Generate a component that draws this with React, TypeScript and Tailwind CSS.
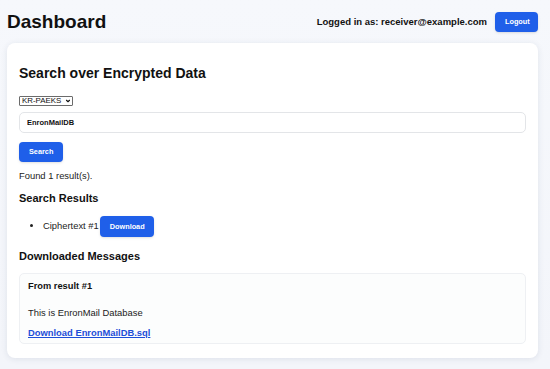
import { ChevronDown } from 'lucide-react';

function BlueButton({ label, className = '' }: { label: string; className?: string }) {
  return (
    <button
      type="button"
      className={`h-[20px] rounded-[4px] bg-[#1f5fe9] px-[10px] text-[7.3px] font-bold leading-none text-white shadow-sm ${className}`}
    >
      {label}
    </button>
  );
}

export default function App() {
  return (
    <div
      className="min-h-screen bg-gradient-to-b from-[#f6f8fc] to-[#f3f5fa] pl-[7px] pr-[12px] pt-[12px] text-[#222]"
      style={{ fontFamily: '"Liberation Sans", Arial, sans-serif' }}
    >
      <header className="flex h-[20px] items-center justify-between">
        <h1 className="text-[19px] font-bold leading-[22px] text-[#111]">Dashboard</h1>
        <div className="flex items-center gap-[8px]">
          <span className="text-[9.5px] font-bold text-[#111]">Logged in as: receiver@example.com</span>
          <BlueButton label="Logout" className="w-[43px] px-0" />
        </div>
      </header>

      <main className="mt-[11px] rounded-[8px] bg-white px-[12px] pb-[14px] pt-[22px] shadow-[0_1px_6px_rgba(30,50,90,0.10)]">
        <h2 className="text-[14px] font-bold leading-[17px] text-[#111]">Search over Encrypted Data</h2>

        <div className="relative mt-[14px] flex w-fit">
          <select
            defaultValue="KR-PAEKS"
            className="block h-[10px] w-[54px] appearance-none rounded-[1px] border border-[#6b6b6b] bg-white pl-[2px] text-[7.9px] leading-[8px] text-[#111]"
          >
            <option>KR-PAEKS</option>
          </select>
          <ChevronDown className="pointer-events-none absolute right-[2px] top-[2px] h-[6px] w-[6px] text-[#111]" strokeWidth={4.5} />
        </div>

        <input
          defaultValue="EnronMailDB"
          className="mt-[6px] block h-[21px] w-full rounded-[5px] border border-[#e3e5e8] px-[7px] text-[7.5px] font-bold text-[#111] outline-none"
        />

        <BlueButton label="Search" className="mt-[9px] block w-[44px] px-0" />

        <p className="mt-[8px] text-[9.4px] leading-[11px]">Found 1 result(s).</p>

        <h3 className="mt-[11px] text-[11px] font-bold leading-[13px] text-[#111]">Search Results</h3>
        <ul className="mt-[11px] list-disc pl-[24px] text-[9.4px]">
          <li>
            <span className="align-middle">Ciphertext #1</span>
            <BlueButton label="Download" className="ml-px h-[21px] w-[54px] px-0 align-middle" />
          </li>
        </ul>

        <h3 className="mt-[13px] text-[11px] font-bold leading-[13px] text-[#111]">Downloaded Messages</h3>

        <section className="mt-[10px] h-[71px] rounded-[5px] border border-[#eef0f3] bg-[#fcfdfd] px-[8px] pt-[7px]">
          <h4 className="text-[9.3px] font-bold leading-[11px] text-[#111]">From result #1</h4>
          <p className="mt-[15px] text-[9.4px] leading-[11px]">This is EnronMail Database</p>
          <a href="#" className="mt-[9px] block text-[9.4px] font-bold leading-[11px] text-[#1d4ed8] underline">
            Download EnronMailDB.sql
          </a>
        </section>
      </main>
    </div>
  );
}
